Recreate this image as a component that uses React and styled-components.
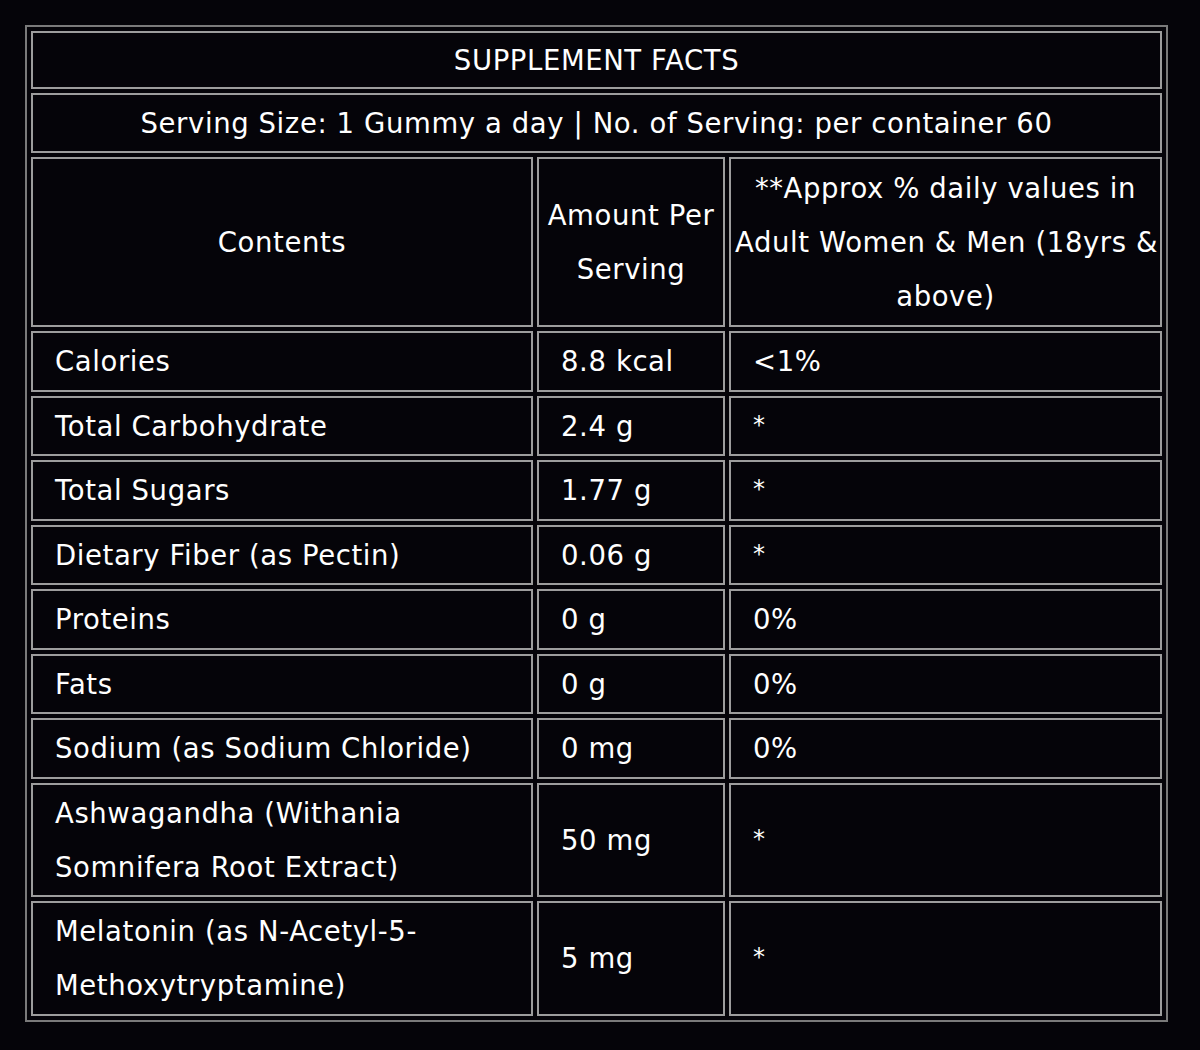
import React from "react";
import styled, { createGlobalStyle } from "styled-components";

const rows = [
	{ name: "Calories", amount: "8.8 kcal", dv: "<1%" },
	{ name: "Total Carbohydrate", amount: "2.4 g", dv: "*" },
	{ name: "Total Sugars", amount: "1.77 g", dv: "*" },
	{ name: "Dietary Fiber (as Pectin)", amount: "0.06 g", dv: "*" },
	{ name: "Proteins", amount: "0 g", dv: "0%" },
	{ name: "Fats", amount: "0 g", dv: "0%" },
	{ name: "Sodium (as Sodium Chloride)", amount: "0 mg", dv: "0%" },
	{ name: ["Ashwagandha (Withania", "Somnifera Root Extract)"], amount: "50 mg", dv: "*" },
	{ name: ["Melatonin (as N-Acetyl-5-", "Methoxytryptamine)"], amount: "5 mg", dv: "*" },
];

function Lines({ text }) {
	if (!Array.isArray(text)) return text;
	return text.map((line, i) => (
		<React.Fragment key={i}>
			{i > 0 && <br />}
			{line}
		</React.Fragment>
	));
}

function App() {
	return (
		<>
			<GlobalStyle />
			<Facts>
				<colgroup>
					<col style={{ width: 502 }} />
					<col style={{ width: 188 }} />
					<col style={{ width: 433 }} />
				</colgroup>
				<tbody>
					<tr>
						<HeadCell colSpan={3} $pad="0 4px">
							SUPPLEMENT FACTS
						</HeadCell>
					</tr>
					<tr>
						<HeadCell colSpan={3}>
							Serving Size: 1 Gummy a day | No. of Serving: per container 60
						</HeadCell>
					</tr>
					<tr>
						<HeadCell $pad="2px 4px">Contents</HeadCell>
						<HeadCell $pad="2px 4px">
							<Lines text={["Amount Per", "Serving"]} />
						</HeadCell>
						<HeadCell $pad="2px 4px">
							<Lines
								text={[
									"**Approx % daily values in",
									"Adult Women & Men (18yrs &",
									"above)",
								]}
							/>
						</HeadCell>
					</tr>
					{rows.map((row, i) => (
						<tr key={i}>
							<Cell>
								<Lines text={row.name} />
							</Cell>
							<Cell>{row.amount}</Cell>
							<Cell>{row.dv === "*" ? <Star>*</Star> : row.dv}</Cell>
						</tr>
					))}
				</tbody>
			</Facts>
		</>
	);
}

export default App;

const GlobalStyle = createGlobalStyle`
	html, body {
		margin: 0;
		background: #050409;
	}
	body {
		padding: 25px 0 0 25px;
		font-family: "DejaVu Sans", "Liberation Sans", sans-serif;
		color: #fff;
	}
`;

const Facts = styled.table`
	width: 1141px;
	table-layout: fixed;
	border-collapse: separate;
	border-spacing: 4px 4px;
	border: 2px solid #7a7a7a;
	font-size: 27.5px;
	letter-spacing: 0.6px;
	line-height: 54px;
`;

const HeadCell = styled.td`
	border: 2px solid #9d9d9d;
	padding: ${(p) => p.$pad || "1px 4px"};
	text-align: center;
	white-space: nowrap;
`;

const Cell = styled.td`
	border: 2px solid #9d9d9d;
	padding: 1px 0 1.5px 22px;
	text-align: left;
	white-space: nowrap;
`;

const Star = styled.span`
	font-size: 24px;
	line-height: 0;
	position: relative;
	top: -3px;
`;
